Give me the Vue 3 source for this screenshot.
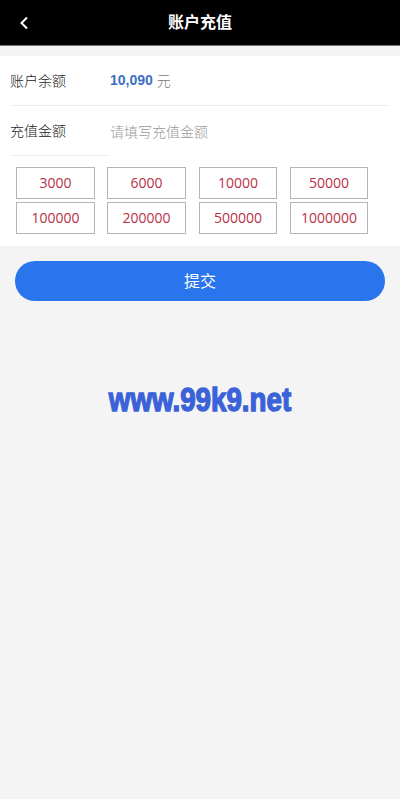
<script setup>
const amounts = [3000, 6000, 10000, 50000, 100000, 200000, 500000, 1000000]
</script>

<template>
  <div class="page">
    <header class="bar">
      <svg class="back" width="10" height="14" viewBox="0 0 10 14" fill="none">
        <path d="M8 1.5 2.5 7 8 12.5" stroke="#fff" stroke-width="2" />
      </svg>
      <h1 class="title">账户充值</h1>
    </header>

    <section class="panel">
      <div class="row first">
        <span class="label">账户余额</span>
        <span class="value"><b class="num">10,090</b> <span class="unit">元</span></span>
      </div>
      <div class="row second">
        <span class="label">充值金额</span>
        <span class="hint">请填写充值金额</span>
      </div>
      <div class="line"></div>
      <div class="grid">
        <div v-for="a in amounts" :key="a" class="cell">{{ a }}</div>
      </div>
    </section>

    <button class="submit">提交</button>

    <div class="mark">www.99k9.net</div>
  </div>
</template>

<style>
html, body { margin: 0; background: #f4f4f4; }
</style>

<style scoped>
.page {
  width: 400px;
  height: 799px;
  overflow: hidden;
  background: #f4f4f4;
  font-family: "Noto Sans CJK SC", sans-serif;
  display: flex;
  flex-direction: column;
}
.bar {
  position: relative;
  height: 46px;
  box-sizing: border-box;
  padding-bottom: 2px;
  background: #000;
  border-bottom: 1px solid #777;
  display: flex;
  align-items: center;
  justify-content: center;
  flex: none;
}
.back { position: absolute; left: 19px; top: 16px; }
.title {
  margin: 0;
  color: #fff;
  font-size: 16px;
  font-weight: 700;
  line-height: 43px;
}
.panel {
  margin-top: 10px;
  background: #fff;
  height: 190px;
  padding: 0 10px;
  box-sizing: border-box;
  flex: none;
}
.row {
  display: flex;
  align-items: center;
  height: 50px;
  box-sizing: border-box;
  font-size: 14px;
  font-weight: 300;
}
.first { border-bottom: 1px solid #eee; padding-bottom: 2px; }
.second { height: 49px; padding-bottom: 1px; }
.label { width: 100px; color: #222; flex: none; }
.value { color: #777; display: flex; align-items: center; gap: 4px; }
.num { color: #3b6fc4; font-family: "Liberation Sans", sans-serif; font-size: 14px; font-weight: 700; }
.unit { color: #777; }
.hint { color: #999; margin-top: 2px; }
.line { width: 100px; height: 1px; background: #eee; }
.grid {
  display: grid;
  grid-template-columns: 91px 92px 91px 78px;
  row-gap: 3px;
  margin: 11px 0 0 6px;
}
.cell {
  width: 79px;
  height: 32px;
  box-sizing: border-box;
  border: 1px solid #b5b5b5;
  color: #b92f48;
  font-family: "Open Sans", sans-serif;
  font-size: 14px;
  line-height: 30px;
  text-align: center;
}
.cell:nth-child(4n + 3),
.cell:nth-child(4n) { width: 78px; }
.submit {
  display: block;
  margin: 15px 15px 0;
  width: 370px;
  height: 40px;
  border: 0;
  border-radius: 20px;
  background: #2a75ed;
  color: #fff;
  font-family: "Noto Sans CJK SC", sans-serif;
  font-size: 16px;
  line-height: 38px;
  padding: 0 0 2px;
  flex: none;
}
.mark {
  margin-top: 79px;
  text-align: center;
  color: #3b62d8;
  font-family: "Liberation Sans", sans-serif;
  font-weight: 700;
  font-size: 33px;
  line-height: 40px;
  -webkit-text-stroke: 1.4px #3b62d8;
  transform: scaleX(0.84);
}
</style>
